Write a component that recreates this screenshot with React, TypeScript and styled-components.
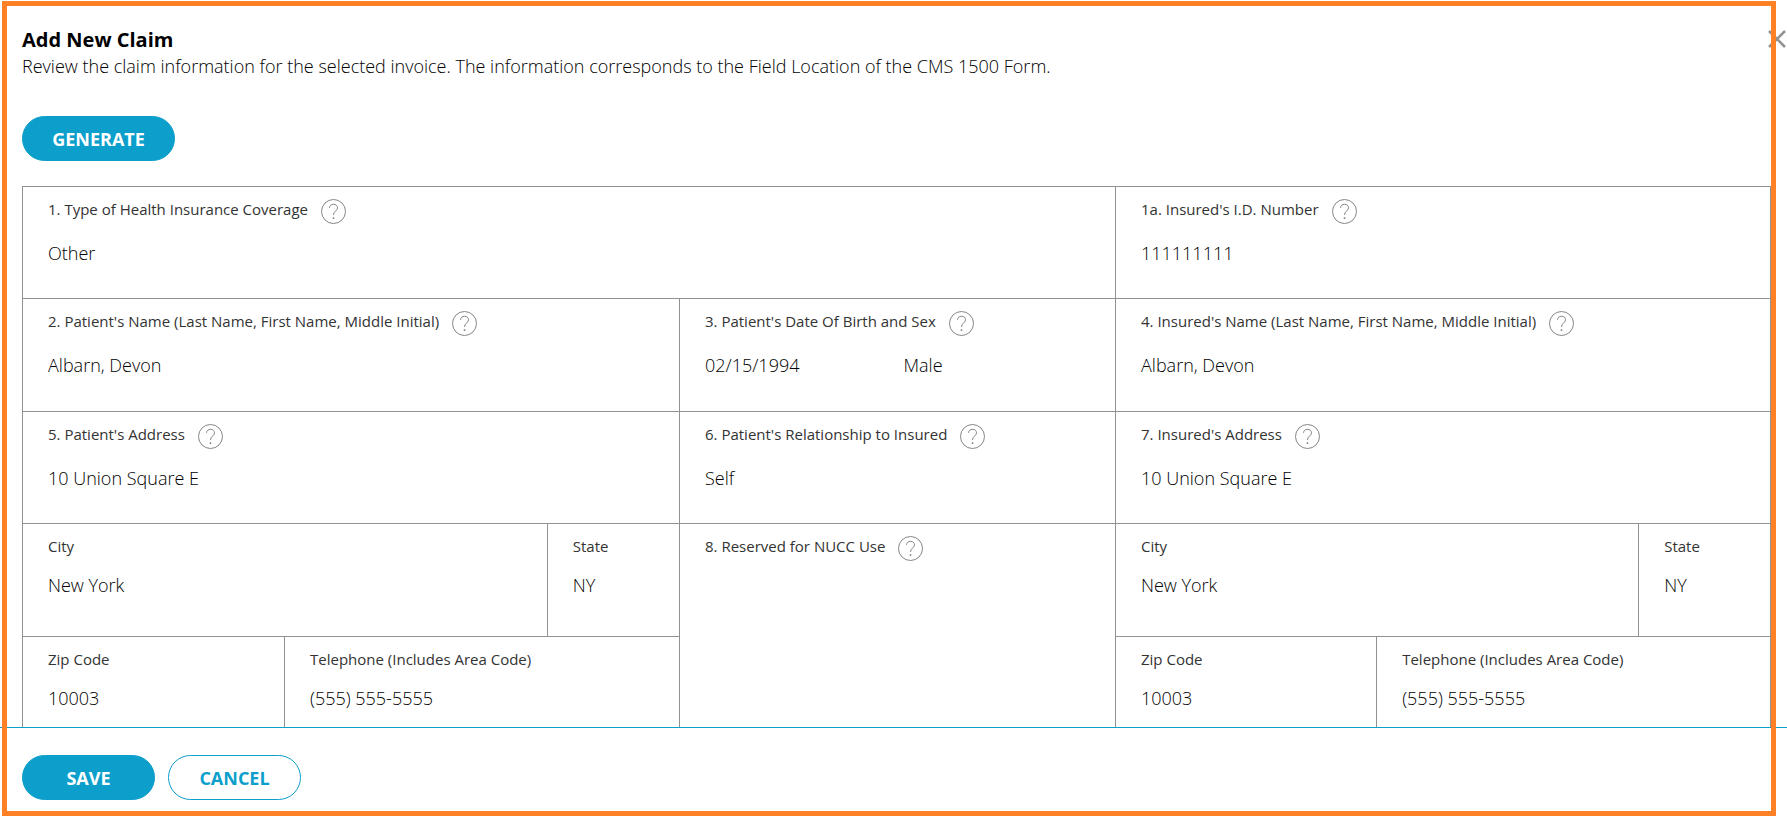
import React from "react";
import styled, { createGlobalStyle } from "styled-components";

const accent = "#0c9fcc";
const line = "#929292";

const GlobalStyle = createGlobalStyle`
  *, *::before, *::after { box-sizing: border-box; }
  body {
    margin: 0;
    background: #fff;
    color: #000;
    font-family: "Open Sans", "Noto Sans", sans-serif;
    font-size: 18px;
    line-height: 24px;
    font-weight: 300;
  }
`;

const Dialog = styled.main`
  position: relative;
  display: flex;
  flex-direction: column;
  height: 100vh;
  overflow: hidden;
`;

const Frame = styled.div`
  position: absolute;
  inset: 1px 11px 6px 2px;
  border: 5px solid #ff8025;
  pointer-events: none;
`;

const Body = styled.div`
  flex: 1;
  min-height: 0;
  overflow: hidden;
  padding: 28px 16px 0 22px;
`;

const Header = styled.header`
  display: flex;
  align-items: flex-start;
  justify-content: space-between;
  margin-right: -16px;
  margin-bottom: 36px;
`;

const Title = styled.h1`
  margin: 0;
  font-size: 20px;
  line-height: 24px;
  font-weight: 700;
`;

const Intro = styled.p`
  margin: 0;
  line-height: 28px;
`;

const CloseButton = styled.button`
  display: flex;
  border: 0;
  padding: 0;
  margin-top: 1px;
  background: none;
  color: ${line};
`;

const PillButton = styled.button<{ $outline?: boolean; $wide?: boolean }>`
  width: ${(p) => (p.$wide ? 153 : 133)}px;
  height: 45px;
  padding: 0;
  border: 1px solid ${accent};
  border-radius: 23px;
  background: ${(p) => (p.$outline ? "#fff" : accent)};
  color: ${(p) => (p.$outline ? accent : "#fff")};
  font: inherit;
  font-weight: 700;
`;

const ClaimGrid = styled.dl`
  display: grid;
  grid-template-columns: 657fr 436fr 655fr;
  grid-template-rows: 112px 113px 112px 113px 113px;
  margin: 25px 0 0;
  border-top: 1px solid ${line};
  border-left: 1px solid ${line};
`;

const Split = styled.div<{ $columns: string }>`
  display: grid;
  grid-template-columns: ${(p) => p.$columns};
`;

const Cell = styled.div<{ $colSpan?: number; $rowSpan?: number }>`
  grid-column: span ${(p) => p.$colSpan ?? 1};
  grid-row: span ${(p) => p.$rowSpan ?? 1};
  min-width: 0;
  padding: 12px 25px 0;
  border-right: 1px solid ${line};
  border-bottom: 1px solid ${line};
`;

const Label = styled.dt`
  display: flex;
  gap: 13px;
  color: #333;
  font-size: 15px;
  line-height: 20px;
  font-weight: 400;
`;

const Value = styled.dd`
  display: grid;
  grid-auto-flow: column;
  grid-auto-columns: 1fr;
  column-gap: 12px;
  margin: 17px 0 0;
`;

const HelpButton = styled.button`
  display: flex;
  border: 0;
  padding: 0;
  background: none;
  color: #858585;
`;

const Footer = styled.footer`
  display: flex;
  gap: 13px;
  padding: 27px 22px 22px;
  border-top: 1px solid ${accent};
`;

function HelpIcon() {
  return (
    <svg width="25" height="25" viewBox="0 0 25 25" fill="none" stroke="currentColor" aria-hidden="true">
      <circle cx="12.5" cy="12.5" r="12" />
      <path d="M8.5 8.8C8.7 6.6 10.2 5.3 12.5 5.3c2.4 0 4 1.4 4 3.5 0 3.2-4 3.2-4 7.2" />
      <path d="M12.5 18.2v1.800" strokeWidth="1.5" />
    </svg>
  );
}

interface FieldProps {
  label: string;
  values?: string[];
  help?: boolean;
  colSpan?: number;
  rowSpan?: number;
}

function Field({ label, values = [], help, colSpan, rowSpan }: FieldProps) {
  return (
    <Cell $colSpan={colSpan} $rowSpan={rowSpan}>
      <Label>
        {label}
        {help && (
          <HelpButton type="button" aria-label={`Help: ${label}`}>
            <HelpIcon />
          </HelpButton>
        )}
      </Label>
      <Value>
        {values.map((v) => (
          <span key={v}>{v}</span>
        ))}
      </Value>
    </Cell>
  );
}

function CityState() {
  return (
    <Split $columns="524fr 132fr">
      <Field label="City" values={["New York"]} />
      <Field label="State" values={["NY"]} />
    </Split>
  );
}

function ZipPhone() {
  return (
    <Split $columns="262fr 395fr">
      <Field label="Zip Code" values={["10003"]} />
      <Field label="Telephone (Includes Area Code)" values={["(555) 555-5555"]} />
    </Split>
  );
}

export default function App() {
  return (
    <>
      <GlobalStyle />
      <Dialog>
        <Body>
          <Header>
            <div>
              <Title>Add New Claim</Title>
              <Intro>
                Review the claim information for the selected invoice. The information corresponds to the Field
                Location of the CMS 1500 Form.
              </Intro>
            </div>
            <CloseButton type="button" aria-label="Close">
              <svg width="20" height="20" viewBox="0 0 20 20" stroke="currentColor" strokeWidth="2.5" aria-hidden="true">
                <path d="M2 2l16 16M18 2L2 18" />
              </svg>
            </CloseButton>
          </Header>
          <PillButton type="button" $wide>
            GENERATE
          </PillButton>
          <ClaimGrid>
            <Field help colSpan={2} label="1. Type of Health Insurance Coverage" values={["Other"]} />
            <Field help label="1a. Insured's I.D. Number" values={["111111111"]} />
            <Field help label="2. Patient's Name (Last Name, First Name, Middle Initial)" values={["Albarn, Devon"]} />
            <Field help label="3. Patient's Date Of Birth and Sex" values={["02/15/1994", "Male"]} />
            <Field help label="4. Insured's Name (Last Name, First Name, Middle Initial)" values={["Albarn, Devon"]} />
            <Field help label="5. Patient's Address" values={["10 Union Square E"]} />
            <Field help label="6. Patient's Relationship to Insured" values={["Self"]} />
            <Field help label="7. Insured's Address" values={["10 Union Square E"]} />
            <CityState />
            <Field help rowSpan={2} label="8. Reserved for NUCC Use" />
            <CityState />
            <ZipPhone />
            <ZipPhone />
          </ClaimGrid>
        </Body>
        <Footer>
          <PillButton type="button">SAVE</PillButton>
          <PillButton type="button" $outline>
            CANCEL
          </PillButton>
        </Footer>
        <Frame />
      </Dialog>
    </>
  );
}
